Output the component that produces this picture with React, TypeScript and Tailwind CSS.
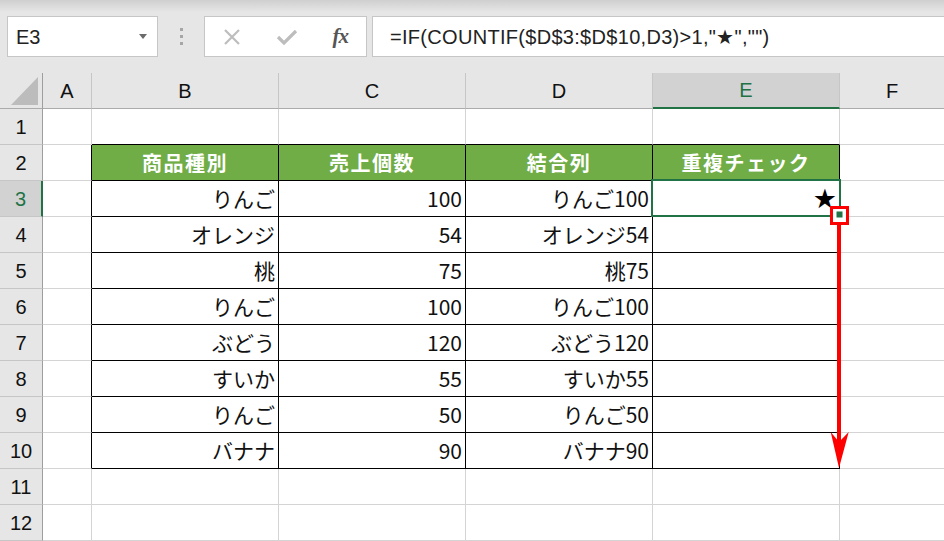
import React from 'react';

const COLS = ['A', 'B', 'C', 'D', 'E', 'F'];

const HEAD = ['商品種別', '売上個数', '結合列', '重複チェック'];

const DATA: [string, string, string][] = [
  ['りんご', '100', 'りんご100'],
  ['オレンジ', '54', 'オレンジ54'],
  ['桃', '75', '桃75'],
  ['りんご', '100', 'りんご100'],
  ['ぶどう', '120', 'ぶどう120'],
  ['すいか', '55', 'すいか55'],
  ['りんご', '50', 'りんご50'],
  ['バナナ', '90', 'バナナ90'],
];

const jp = 'font-["Noto_Sans_CJK_JP","Noto_Sans",sans-serif]';

function FormulaBar() {
  return (
    <div className="h-[73px] flex items-start pt-[16px] pl-[7px] bg-[linear-gradient(#cfcfcf,#e6e6e6_12px)]">
      <div className="w-[151px] h-[41px] bg-white border border-[#c6c6c6] flex items-center justify-between pl-[8px] pr-[10px]">
        <span className="text-[20px] text-[#222] font-['Liberation_Sans',sans-serif]">E3</span>
        <svg width="8" height="5" viewBox="0 0 8 5"><path d="M0 0h8L4 5z" fill="#6b6b6b" /></svg>
      </div>
      <div className="w-[46px] h-[41px] flex items-center justify-center">
        <div className="flex flex-col gap-[4px]">
          <span className="w-[3px] h-[3px] bg-[#a6a6a6]" />
          <span className="w-[3px] h-[3px] bg-[#a6a6a6]" />
          <span className="w-[3px] h-[3px] bg-[#a6a6a6]" />
        </div>
      </div>
      <div className="w-[163px] h-[41px] bg-white border border-[#c6c6c6] flex items-center pl-[18px] pr-[18px] justify-between">
        <svg width="18" height="18" viewBox="0 0 18 18"><path d="M2 2L16 16M16 2L2 16" stroke="#bdbdbd" strokeWidth="2.2" /></svg>
        <svg width="22" height="18" viewBox="0 0 22 18"><path d="M2 9l6 6L20 3" stroke="#bdbdbd" strokeWidth="3.2" fill="none" /></svg>
        <span className="text-[21px] italic font-bold text-[#555] font-['Liberation_Serif',serif] tracking-[-1px]">fx</span>
      </div>
      <div className="ml-[5px] flex-1 h-[41px] bg-white border border-r-0 border-[#c6c6c6] flex items-center pl-[17px]">
        <span className="text-[20px] text-[#222] tracking-[0.3px] font-['Liberation_Sans',sans-serif]">
          =IF(COUNTIF($D$3:$D$10,D3)&gt;1,"★","")
        </span>
      </div>
    </div>
  );
}

function cellBorder(r: number, c: number) {
  const inTable = r >= 2 && r <= 10 && c >= 1 && c <= 4;
  const right = inTable || (c === 0 && r >= 2 && r <= 10) ? 'border-r-black' : 'border-r-[#d4d4d4]';
  const bottom = inTable || (r === 1 && c >= 1 && c <= 4) ? 'border-b-black' : 'border-b-[#d4d4d4]';
  return `border-r border-b ${right} ${bottom}`;
}

export default function App() {
  const rows = Array.from({ length: 12 }, (_, i) => i + 1);
  return (
    <div className="w-[944px] h-[541px] overflow-hidden bg-[#e6e6e6]">
      <FormulaBar />
      <div className="relative grid grid-cols-[43px_49px_187px_187px_187px_187px_105px] auto-rows-[36px] bg-white">
        <div className="bg-[#e6e6e6] border-r border-b border-r-[#9e9e9e] border-b-[#ababab] flex items-end justify-end pr-[4px] pb-[3px]">
          <svg width="27" height="28" viewBox="0 0 27 28"><path d="M27 0V28H0z" fill="#bcbcbc" /></svg>
        </div>
        {COLS.map((c) =>
          c === 'E' ? (
            <div key={c} className="bg-[#d2d2d2] border-r border-r-[#c6c6c6] border-b-2 border-b-[#217346] flex items-center justify-center text-[20px] text-[#217346] font-['Liberation_Sans',sans-serif]">
              {c}
            </div>
          ) : (
            <div key={c} className="bg-[#e6e6e6] border-r border-b border-r-[#c6c6c6] border-b-[#ababab] flex items-center justify-center text-[20px] text-[#111] font-['Liberation_Sans',sans-serif]">
              {c}
            </div>
          )
        )}
        {rows.map((r) => (
          <React.Fragment key={r}>
            {r === 3 ? (
              <div className="bg-[#d2d2d2] border-r-2 border-b border-r-[#217346] border-b-[#c6c6c6] flex items-center justify-center text-[20px] text-[#217346] font-['Liberation_Sans',sans-serif]">
                {r}
              </div>
            ) : (
              <div className="bg-[#e6e6e6] border-r border-b border-r-[#9e9e9e] border-b-[#c6c6c6] flex items-center justify-center text-[20px] text-[#111] font-['Liberation_Sans',sans-serif]">
                {r}
              </div>
            )}
            {COLS.map((_, c) => {
              const border = cellBorder(r, c);
              if (r === 2 && c >= 1 && c <= 4) {
                return (
                  <div key={c} className={`${border} bg-[#70ad47] flex items-center justify-center text-white font-bold text-[20px] tracking-[1.5px] ${jp}`}>
                    {HEAD[c - 1]}
                  </div>
                );
              }
              let text = '';
              if (r >= 3 && r <= 10 && c >= 1 && c <= 3) text = DATA[r - 3][c - 1];
              if (r === 3 && c === 4) {
                return (
                  <div key={c} className={`${border} flex items-center justify-end pr-[2px] text-[27px] leading-none text-black font-['DejaVu_Sans',sans-serif]`}>
                    ★
                  </div>
                );
              }
              return (
                <div key={c} className={`${border} flex items-center justify-end pr-[3px] text-[21px] text-[#111] leading-none ${jp}`}>
                  {text}
                </div>
              );
            })}
          </React.Fragment>
        ))}

        {/* selection on E3 */}
        <div className="absolute left-[651px] top-[106px] w-[190px] h-[38px] border-2 border-[#217346] pointer-events-none" />
        {/* fill handle + red drag arrow */}
        <svg className="absolute left-[826px] top-[129px]" width="26" height="270" viewBox="0 0 26 270">
          <rect x="5.5" y="5.5" width="16" height="16" fill="white" stroke="#ff0000" strokeWidth="3" />
          <rect x="10.5" y="9.5" width="6" height="6" fill="#217346" />
          <rect x="11" y="23" width="4" height="220" fill="#ff0000" />
          <path d="M4.7 230L13 266L22.7 230L13 240z" fill="#ff0000" />
        </svg>
      </div>
    </div>
  );
}
